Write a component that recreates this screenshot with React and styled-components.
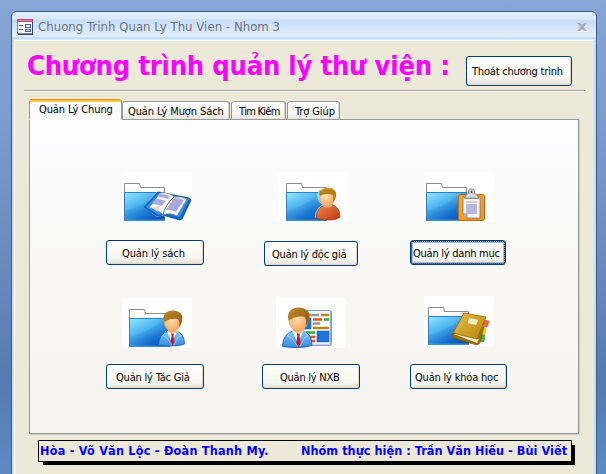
import React from "react";
import styled, { createGlobalStyle } from "styled-components";

const ui = `"DejaVu Sans Condensed", "DejaVu Sans", sans-serif`;

const GlobalStyle = createGlobalStyle`
  * { box-sizing: border-box; }
  body { margin: 0; overflow: hidden; }
  button { font: inherit; color: inherit; }
`;

const Desktop = styled.div`
  width: 606px;
  height: 474px;
  overflow: hidden;
  padding: 11px 12px 0 11px;
  background: linear-gradient(#86a7d5 0, #7b9ccc 120px, #6687bb 290px, #567aaf 380px, #5e8ac4 474px);
  font-family: ${ui};
  font-stretch: condensed;
`;

const Window = styled.div`
  width: 586px;
  height: 480px;
  display: flex;
  flex-direction: column;
  border: 1px solid #3b5f8e;
  border-radius: 6px 6px 0 0;
  overflow: hidden;
  background: #c5dcf7;
`;

const TitleBar = styled.header`
  flex: none;
  height: 28px;
  display: flex;
  align-items: center;
  padding: 2px 8px 0 5px;
  background: linear-gradient(#e3effd 0, #d9e8fb 7px, #c8dcf7 8px, #e3effe 25px, #a9cdf4 26px, #d9ebff 27px);
`;

const WindowTitle = styled.h1`
  flex: 1;
  margin: 0 0 0 4px;
  font-size: 13px;
  line-height: 18px;
  font-weight: 400;
  letter-spacing: ${(p) => p.$ls}px;
  color: #6a727e;
  white-space: nowrap;
`;

const Body = styled.main`
  flex: 1;
  margin: 0 2px;
  padding-top: 1px;
  border-left: 1px solid #fff;
  border-top: 1px solid #fff;
  background: #ece9d8;
`;

const Heading = styled.div`
  display: flex;
  height: 49px;
  margin: 0 9px 0 9px;
  padding: 0 0 0 3px;
  border-bottom: 1px solid #a5a293;
  box-shadow: 0 1px 0 #fff;
`;

const Headline = styled.h2`
  width: 439px;
  margin: 6px 0 0 0;
  font-size: 27px;
  line-height: 36px;
  font-weight: 700;
  letter-spacing: ${(p) => p.$ls}px;
  color: #ff00ff;
  white-space: nowrap;
`;

const Button = styled.button`
  display: flex;
  flex: none;
  align-items: center;
  width: ${(p) => p.$w}px;
  height: ${(p) => p.$h || 25}px;
  margin: ${(p) => p.$top || 0}px 0 0 ${(p) => p.$left || 0}px;
  padding: 2px 0 0 ${(p) => p.$pad}px;
  border: 1px solid #003c74;
  border-radius: 3px;
  background: linear-gradient(#fff, #f6f5ef 75%, #e3e0d3);
  box-shadow: ${(p) => (p.$active ? "inset 0 0 0 2px #9bb9ea" : "inset -1px -1px 0 #dcd8cb")};
  outline: ${(p) => (p.$active ? "1px dotted #111" : "none")};
  outline-offset: -2px;
  font-size: 11px;
  line-height: 16px;
  letter-spacing: ${(p) => p.$ls || 0}px;
  color: #000;
  white-space: nowrap;
`;

const Tabs = styled.nav`
  display: flex;
  align-items: flex-end;
  height: 21px;
  margin: 8px 0 -1px 14px;
`;

const Tab = styled.div`
  position: relative;
  width: ${(p) => p.$w}px;
  height: ${(p) => (p.$active ? 21 : 19)}px;
  margin-right: ${(p) => p.$gap || 0}px;
  padding: 2px 0 0 ${(p) => p.$pad}px;
  border: 1px solid #919b9c;
  border-bottom-color: ${(p) => (p.$active ? "#fcfcfc" : "#919b9c")};
  border-top: 1px solid ${(p) => (p.$active ? "#e68b2c" : "#919b9c")};
  border-radius: 3px 3px 0 0;
  background: ${(p) => (p.$active ? "#fcfcfc" : "linear-gradient(#fff, #f5f4ef 70%, #e8e6dc)")};
  box-shadow: ${(p) => (p.$active ? "inset 0 2px 0 #ffc73c" : "inset -1px 0 0 #d5d5cb")};
  font-size: 11px;
  line-height: ${(p) => (p.$active ? 15 : 16)}px;
  letter-spacing: ${(p) => p.$ls || 0}px;
  color: #000;
  white-space: nowrap;
`;

const Panel = styled.section`
  display: grid;
  grid-template-columns: 156px 148px 98px;
  grid-template-rows: 126px 110px;
  align-content: start;
  width: 550px;
  height: 315px;
  margin-left: 14px;
  padding: 52px 0 0 76px;
  border: 1px solid #919b9c;
  background: linear-gradient(#fcfcfe, #f4f3ee);
  box-shadow: 1px 1px 0 #cfccbd;
`;

const Card = styled.article`
  display: flex;
  flex-direction: column;
`;

const Picture = styled.svg`
  display: block;
  flex: none;
  width: 70px;
  height: 50px;
  margin: ${(p) => p.$top || 0}px 0 0 ${(p) => p.$left}px;
  background: #fff;
`;

const Credits = styled.footer`
  display: flex;
  width: 534px;
  height: 22px;
  margin: 6px 0 0 23px;
  border: 1px solid #000;
  background: #ece9d8;
  box-shadow: 4px 4px 0 -1px #000;
  font-size: 12.5px;
  line-height: 19px;
  font-weight: 700;
  color: #0000ff;
  white-space: nowrap;
`;

const Names = styled.span`
  flex: none;
  width: ${(p) => p.$w}px;
  padding-left: 1px;
  letter-spacing: ${(p) => p.$ls}px;
`;

const FormIcon = () => (
  <svg width="17" height="16" viewBox="0 0 17 16" shapeRendering="crispEdges">
    <rect x="0.5" y="0.5" width="15" height="14" fill="#f2f4fb" stroke="#7a88a5" />
    <path d="M15 3v12H1" fill="none" stroke="#34456b" />
    <rect width="16" height="3" fill="#b4476c" />
    <rect x="1" y="1" width="14" height="1" fill="#d88ca5" />
    <path d="M2 6.5h4M2 10.5h4M8 5.5h5v3H8zM8 10.5h5v2H8z" fill="none" stroke="#4c5f8c" />
  </svg>
);

const CloseIcon = () => (
  <svg width="12" height="10" viewBox="0 0 12 10">
    <path d="M1 9.500h4L6.500 8 8 9.500h4" fill="none" stroke="#fff" />
    <path d="M1 1h3l2 2 2-2h3L7.500 5 11 9H8L6 7 4 9H1l3.500-4z" fill="#a3a9b3" />
  </svg>
);

const Defs = () => (
  <defs>
    <linearGradient id="blue" x1=".1" y1="0" x2=".8" y2="1">
      <stop offset="0" stopColor="#8ce4ff" />
      <stop offset=".4" stopColor="#4fb4f0" />
      <stop offset=".75" stopColor="#1670cf" />
      <stop offset="1" stopColor="#0a50b4" />
    </linearGradient>
    <linearGradient id="paper" x1="0" y1="0" x2="0" y2="1">
      <stop offset="0" stopColor="#fff" />
      <stop offset="1" stopColor="#ddd" />
    </linearGradient>
    <radialGradient id="face" cx=".4" cy=".35" r=".7">
      <stop offset="0" stopColor="#ffe3b8" />
      <stop offset="1" stopColor="#f5a35a" />
    </radialGradient>
    <linearGradient id="hair" x1="0" y1="0" x2="1" y2="1">
      <stop offset="0" stopColor="#c0882a" />
      <stop offset="1" stopColor="#8a5a10" />
    </linearGradient>
    <linearGradient id="red" x1="0" y1="0" x2="1" y2="1">
      <stop offset="0" stopColor="#f08b4c" />
      <stop offset="1" stopColor="#bd3510" />
    </linearGradient>
    <linearGradient id="suit" x1="0" y1="0" x2="0" y2="1">
      <stop offset="0" stopColor="#86c4f8" />
      <stop offset="1" stopColor="#348be0" />
    </linearGradient>
    <linearGradient id="gold" x1="0" y1="0" x2="1" y2="1">
      <stop offset="0" stopColor="#e5bd45" />
      <stop offset="1" stopColor="#b98708" />
    </linearGradient>
    <linearGradient id="orange" x1="0" y1="0" x2="1" y2="1">
      <stop offset="0" stopColor="#f9a63b" />
      <stop offset="1" stopColor="#ee9322" />
    </linearGradient>
  </defs>
);

const Folder = ({ x = 2, y = 11 }) => (
  <g transform={`translate(${x} ${y})`}>
    <path d="M.5 37V.5h15l1 4h24V37z" fill="url(#paper)" stroke="#8b8b8b" />
    <path d="M2 2h12l1.500 4H39" fill="none" stroke="#fff" />
    <path d="M.5 9.500H40.500V37.500H.5z" fill="url(#blue)" stroke="#3c78ae" />
    <path d="M1 9.500h39" stroke="#2c80c8" />
    <path d="M1 28Q18 24 36 10h4v10Q24 33 1 35z" fill="#0a65c0" opacity=".12" />
    <path d="M1 37h39" stroke="#48b4f0" opacity=".6" />
  </g>
);

const Book = () => (
  <g>
    <path d="M23 35L36 20l31 6 1 3-8 18-3 1-16-5-6 1z" fill="#075fb5" stroke="#a8dcff" strokeWidth="1.6" />
    <path d="M22 35L36 20l31 6 2 2-9 19-2 1-17-5-6 1z" fill="#1168cc" stroke="#06448d" strokeWidth=".7" />
    <path d="M24 35l13-14 30 6-9 18-16-4-5 2z" fill="#2f94ea" />
    <path d="M27 36l11-15q10-1 14 4 6-1 13 2L55 44q-7-4-14-1-5-6-14-7z" fill="#f8f8f4" stroke="#777" strokeWidth=".7" />
    <path d="M52 25Q43 33 41 43" fill="none" stroke="#666" />
    <path d="M38 22q5 0 10 2l-2 3q-5-2-10-2zM34 27q5 0 10 2l-4 5q-5-2-10-2zM52 26q6 0 10 2L54 40q-5-3-10-2z" fill="#aaa9dc" />
    <path d="M28 35l10-1-2 6z" fill="#d6d1c4" opacity=".7" />
  </g>
);

const Reader = () => (
  <g>
    <path d="M38 46q1-11 9-13l-1-1q-8-4-4-14" fill="none" stroke="#a8dcff" strokeWidth="2.5" />
    <path d="M38 46q1-11 9-13l8 0q7 3 7 12-3 3-11 3t-13-2z" fill="url(#red)" stroke="#9c2d0f" strokeWidth=".7" />
    <path d="M45 34q4 3 9 0v-4h-9z" fill="#c9c9cf" />
    <ellipse cx="49" cy="26" rx="7.500" ry="8.500" fill="url(#face)" stroke="#d88c48" strokeWidth=".5" />
    <path d="M41.500 24c-3-11 20-11 16.500 1-1 3-2 4-3 5l0-7c-5-2-9-1-13.500 1z" fill="#b58211" />
    <path d="M43 19q4-4 9-2" fill="none" stroke="#d4aa38" />
  </g>
);

const Clipboard = () => (
  <g>
    <rect x="34.500" y="22.500" width="26" height="26" rx="2" fill="url(#orange)" stroke="#b56c10" />
    <path d="M39 25h17v21H43l-4-4z" fill="#f5f5fa" stroke="#777" strokeWidth=".8" />
    <path d="M39 42h4v4" fill="#ccc" stroke="#777" strokeWidth=".7" />
    <path d="M42 30h11" stroke="#aaa" />
    <rect x="42" y="32" width="11" height="10" fill="#b6b9dc" />
    <path d="M40.500 26.500q0-4 4-5-1-4.500 3-4.500t3 4.500q4 1 4 5z" fill="#ccc" stroke="#888" />
    <circle cx="47.500" cy="20" r="1" fill="#444" />
    <path d="M43 24q4-2 9 0" fill="none" stroke="#f4f4f4" />
  </g>
);

const Businessman = ({ x = 36, y = 13, big = false }) => (
  <g transform={`translate(${x} ${y}) scale(${big ? 1.13 : 1})`}>
    <path d="M.5 34q0-11 10-14h8q8 3 8 13-5 2-13 2T.5 34z" fill="url(#suit)" stroke="#1760ac" strokeWidth=".8" />
    <path d="M9 20h10l-5 12z" fill="#fff" />
    <path d="M13 21h3l-.5 4 1 6-2 4-2-4 1-6z" fill="#d01824" />
    <path d="M8 20l-3 5 3 1 6 8M19 20l4 5-3 1-4 8" fill="none" stroke="#b5daff" strokeWidth=".7" />
    <path d="M10 18h9v3l-4 2-5-2z" fill="#f8bf80" />
    <ellipse cx="14.500" cy="10.500" rx="8.500" ry="10" fill="url(#face)" stroke="#d69755" strokeWidth=".5" />
    <path d="M6 11C1-4 28-4 24 10q-1 4-3 6 1-5-1-8c-5-1-9 0-14 3z" fill="url(#hair)" />
  </g>
);

const Newsletter = () => (
  <g>
    <rect x="20.500" y="12.500" width="35" height="35" rx="2" fill="#f8fbff" stroke="#719bdb" />
    <path d="M54.500 13v34M22 47h33" stroke="#8fa8de" />
    <path d="M32 17h11M37 25.500h7" stroke="#999" strokeWidth="2.500" />
    <path d="M45 17h8M37 30h16" stroke="#b88710" strokeWidth="2.500" />
    <path d="M37 21.500h9M31 39h8M31 43h8" stroke="#f34b20" strokeWidth="2.500" />
    <path d="M48 21.500h5M30 34.500h9" stroke="#36ad35" strokeWidth="2.500" />
    <path d="M28 20h7v11h-7zM41 33h12v11H41z" fill="#2272dc" stroke="#1359b6" strokeWidth=".5" />
  </g>
);

const Notebook = () => (
  <g>
    <path d="M59 24l6 1-2 6-6-1z" fill="#ee6438" stroke="#bb3a15" strokeWidth=".5" />
    <path d="M57 31l5 1.500-1 6-6-1z" fill="#ffe200" stroke="#c1a500" strokeWidth=".5" />
    <path d="M55 39l6 0-1 7-6-1z" fill="#43b843" stroke="#188330" strokeWidth=".5" />
    <path d="M28 38l1 4 24 7 3-2 4-16z" fill="#9a7004" stroke="#765406" strokeWidth=".7" />
    <path d="M30 38l23 9 2-4-24-6z" fill="#f4edcd" />
    <path d="M29 37L40 17l22 4-9 22z" fill="url(#gold)" stroke="#906605" strokeWidth=".8" />
    <path d="M32 37L42 18" stroke="#d9ba57" />
    <path d="M45 21.500l9.500 2-2 6-9.500-2z" fill="#fff1c4" stroke="#b58a1b" strokeWidth=".6" />
  </g>
);

const CARDS = [
  { text: "Quản lý sách", art: <><Folder /><Book /></>, pic: { $left: 16 }, btn: { $w: 98, $top: 18, $pad: 15, $ls: -0.12 } },
  { text: "Quản lý độc giả", art: <><Folder x={8} /><Reader /></>, pic: { $left: 16 }, btn: { $w: 94, $top: 19, $left: 2, $pad: 7, $ls: -0.2 } },
  { text: "Quản lý danh mục", art: <><Folder /><Clipboard /></>, pic: { $left: 14 }, btn: { $w: 96, $top: 18, $pad: 2, $ls: -0.25, $active: true } },
  { text: "Quản lý Tác Giả", art: <><Folder x={7} /><Businessman /></>, pic: { $left: 16 }, btn: { $w: 98, $top: 16, $pad: 9, $ls: -0.2 } },
  { text: "Quản lý NXB", art: <><Newsletter /><Businessman x={6} y={10} big /></>, pic: { $left: 14 }, btn: { $w: 98, $top: 16, $pad: 17, $ls: -0.25 } },
  { text: "Quản lý khóa học", art: <><Folder x={4} /><Notebook /></>, pic: { $left: 14, $top: -2 }, btn: { $w: 97, $top: 18, $pad: 4, $ls: -0.2 } },
];

export default function App() {
  return (
    <Desktop>
      <GlobalStyle />
      <svg width="0" height="0" display="block"><Defs /></svg>
      <Window>
        <TitleBar>
          <FormIcon />
          <WindowTitle $ls={0.05}>Chuong Trinh Quan Ly Thu Vien - Nhom 3</WindowTitle>
          <CloseIcon />
        </TitleBar>
        <Body>
          <Heading>
            <Headline $ls={-0.15}>Chương trình quản lý thư viện :</Headline>
            <Button $w={106} $h={30} $top={14} $pad={5} $ls={-0.2}>Thoát chương trình</Button>
          </Heading>
          <Tabs>
            <Tab $active $w={93} $pad={9} $ls={-0.1}>Quản Lý Chung</Tab>
            <Tab $w={108} $gap={1} $pad={5} $ls={-0.1}>Quản Lý Mượn Sách</Tab>
            <Tab $w={55} $gap={1} $pad={7} $ls={-0.75}>Tìm Kiếm</Tab>
            <Tab $w={53} $pad={7} $ls={-0.1}>Trợ Giúp</Tab>
          </Tabs>
          <Panel>
            {CARDS.map((c) => (
              <Card key={c.text}>
                <Picture viewBox="0 0 70 50" {...c.pic}>{c.art}</Picture>
                <Button {...c.btn}>{c.text}</Button>
              </Card>
            ))}
          </Panel>
          <Credits>
            <Names $w={261} $ls={0.25}>Hòa - Võ Văn Lộc - Đoàn Thanh My.</Names>
            <Names $w={266} $ls={0.07}>Nhóm thực hiện : Trần Văn Hiếu - Bùi Viết</Names>
          </Credits>
        </Body>
      </Window>
    </Desktop>
  );
}
